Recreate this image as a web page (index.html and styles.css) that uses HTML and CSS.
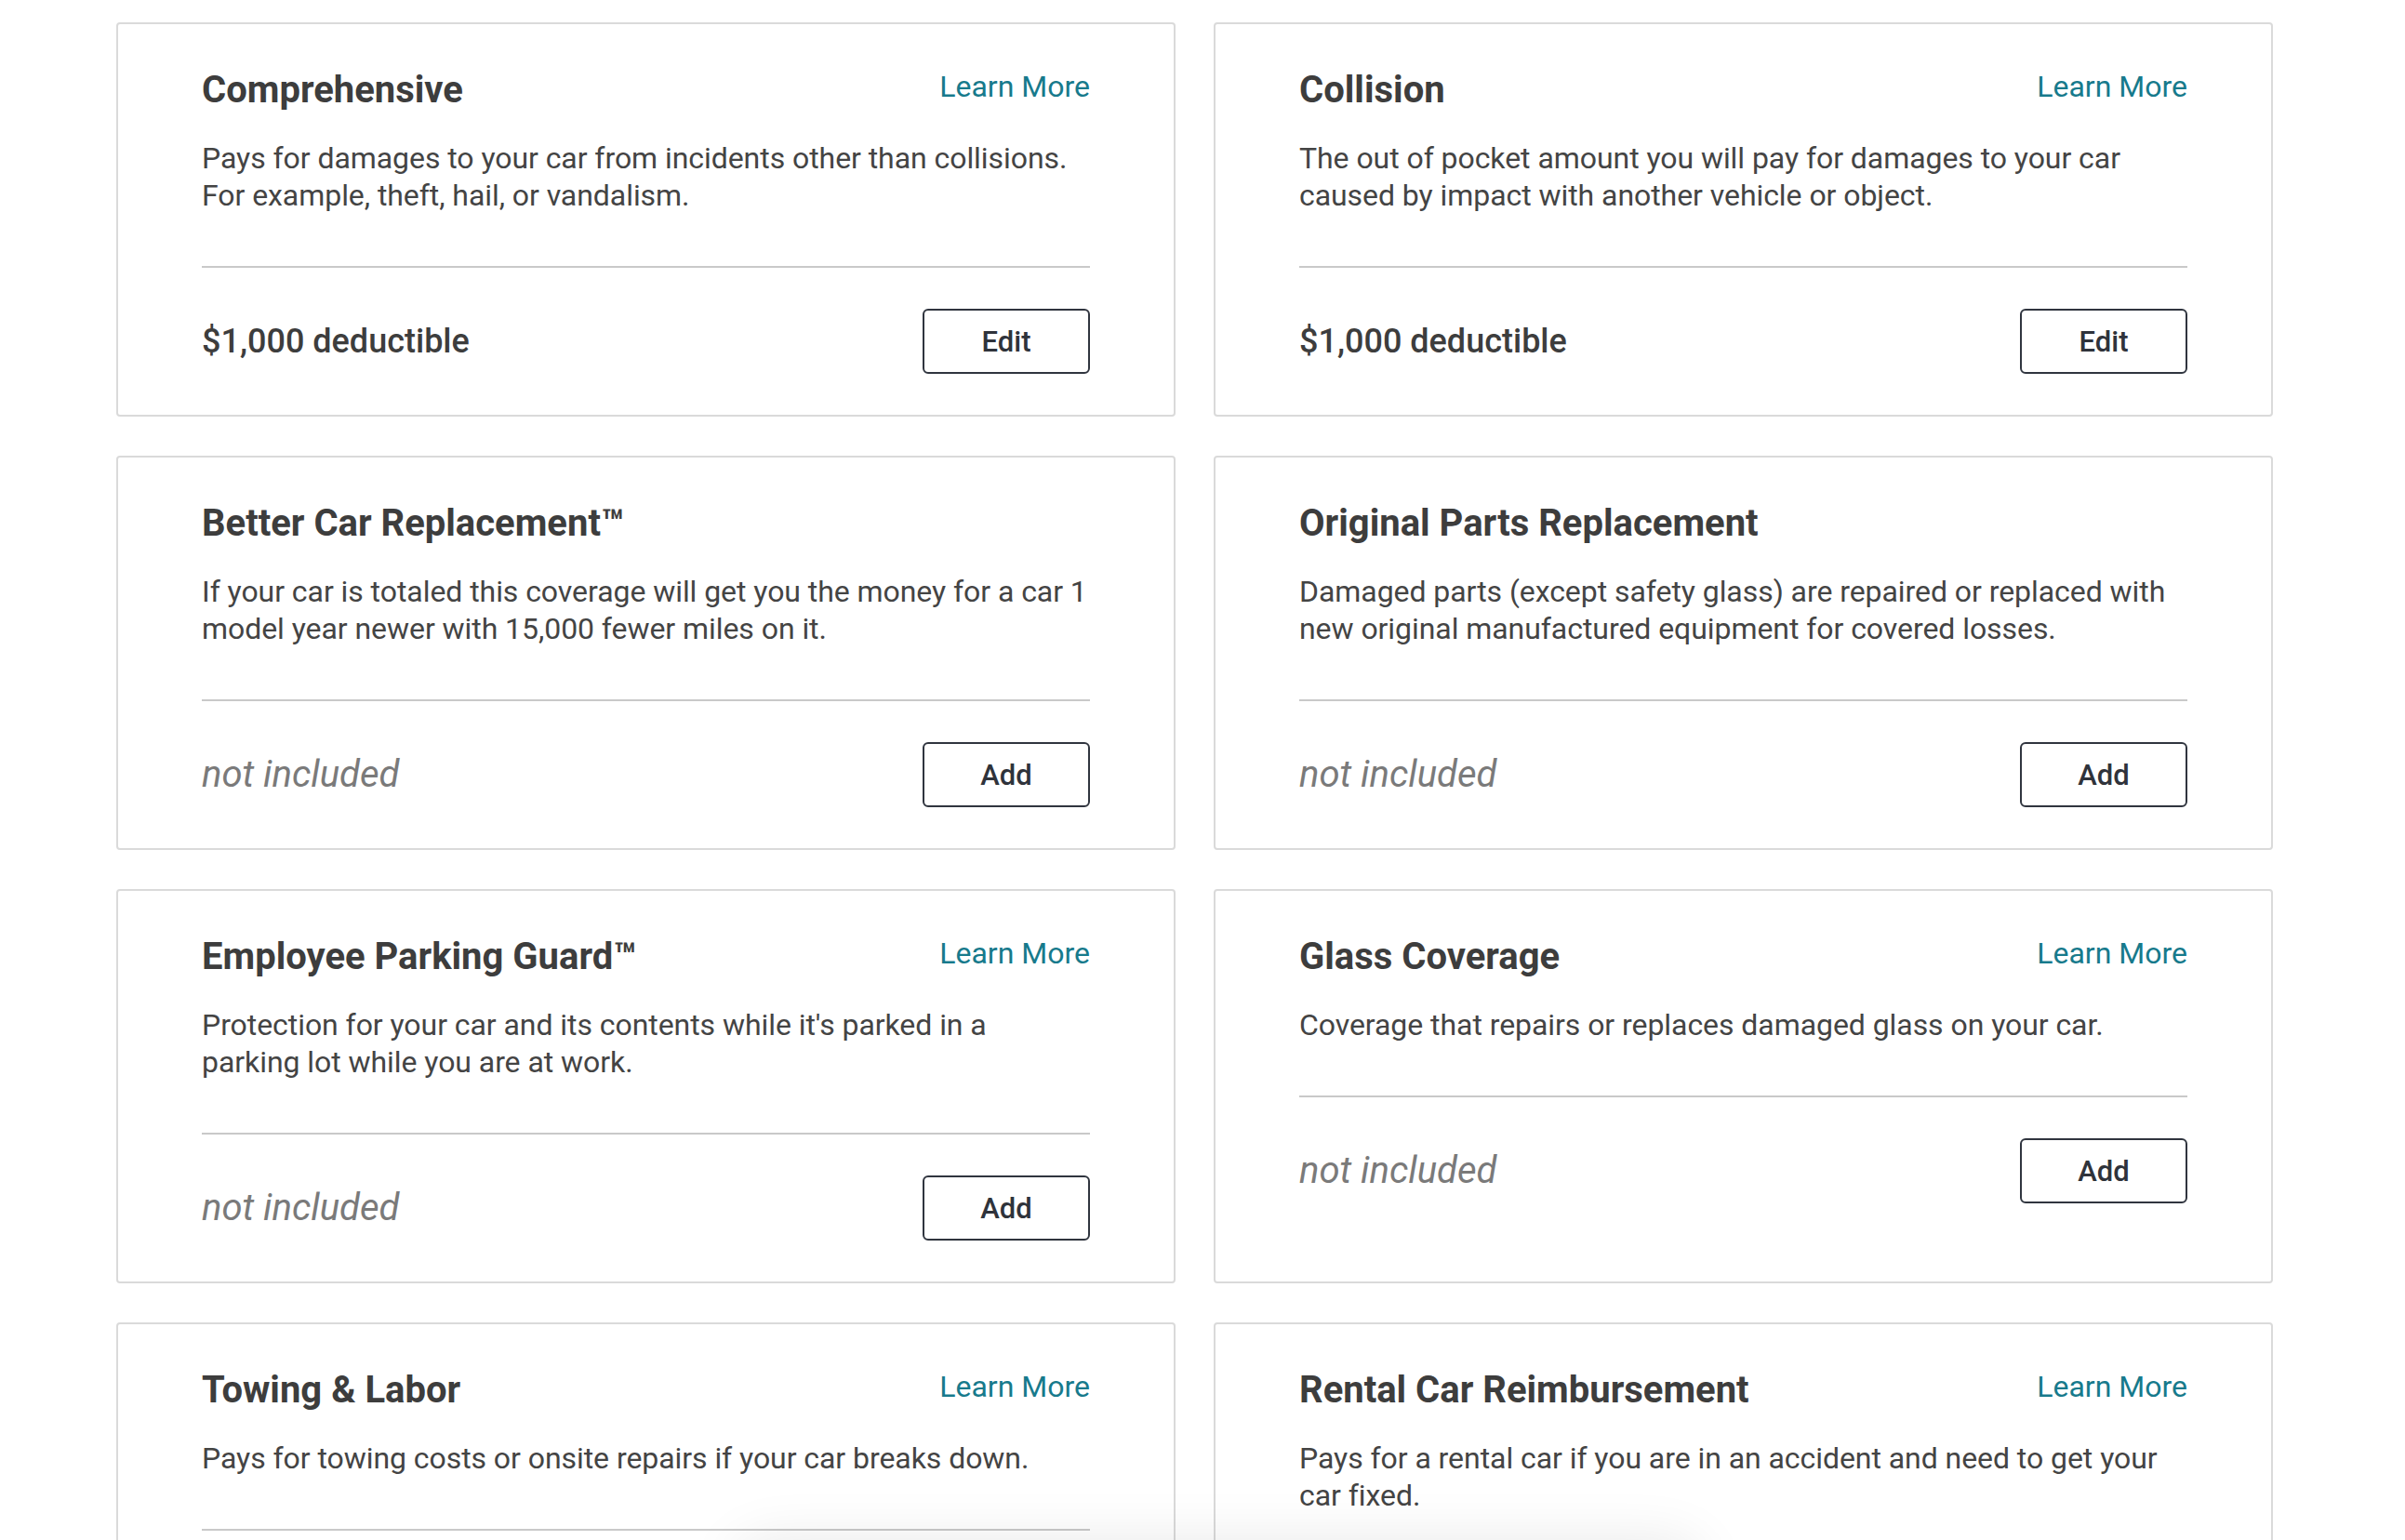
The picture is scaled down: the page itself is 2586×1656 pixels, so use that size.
FILE: index.html
```html
<!DOCTYPE html>
<html>
<head>
    <title>Coverages</title>
    <meta charset="utf-8">
    <link rel="stylesheet" href="styles.css">
</head>
<body>
<div class="coverage-grid">
    <div class="coverage-card">
        <div class="card-head">
            <h3>Comprehensive</h3>
            <a href="#" class="learn-more">Learn More</a>
        </div>
        <p class="card-desc">Pays for damages to your car from incidents other than collisions. For example, theft, hail, or vandalism.</p>
        <div class="card-foot">
            <span class="amount">$1,000 deductible</span>
            <button type="button">Edit</button>
        </div>
    </div>

    <div class="coverage-card">
        <div class="card-head">
            <h3>Collision</h3>
            <a href="#" class="learn-more">Learn More</a>
        </div>
        <p class="card-desc">The out of pocket amount you will pay for damages to your car caused by impact with another vehicle or object.</p>
        <div class="card-foot">
            <span class="amount">$1,000 deductible</span>
            <button type="button">Edit</button>
        </div>
    </div>

    <div class="coverage-card">
        <div class="card-head">
            <h3>Better Car Replacement™</h3>
        </div>
        <p class="card-desc">If your car is totaled this coverage will get you the money for a car 1 model year newer with 15,000 fewer miles on it.</p>
        <div class="card-foot">
            <span class="amount empty">not included</span>
            <button type="button">Add</button>
        </div>
    </div>

    <div class="coverage-card">
        <div class="card-head">
            <h3>Original Parts Replacement</h3>
        </div>
        <p class="card-desc">Damaged parts (except safety glass) are repaired or replaced with new original manufactured equipment for covered losses.</p>
        <div class="card-foot">
            <span class="amount empty">not included</span>
            <button type="button">Add</button>
        </div>
    </div>

    <div class="coverage-card">
        <div class="card-head">
            <h3>Employee Parking Guard™</h3>
            <a href="#" class="learn-more">Learn More</a>
        </div>
        <p class="card-desc">Protection for your car and its contents while it's parked in a parking lot while you are at work.</p>
        <div class="card-foot">
            <span class="amount empty">not included</span>
            <button type="button">Add</button>
        </div>
    </div>

    <div class="coverage-card">
        <div class="card-head">
            <h3>Glass Coverage</h3>
            <a href="#" class="learn-more">Learn More</a>
        </div>
        <p class="card-desc">Coverage that repairs or replaces damaged glass on your car.</p>
        <div class="card-foot">
            <span class="amount empty">not included</span>
            <button type="button">Add</button>
        </div>
    </div>

    <div class="coverage-card">
        <div class="card-head">
            <h3>Towing &amp; Labor</h3>
            <a href="#" class="learn-more">Learn More</a>
        </div>
        <p class="card-desc">Pays for towing costs or onsite repairs if your car breaks down.</p>
        <div class="card-foot">
            <span class="amount empty">not included</span>
            <button type="button">Add</button>
        </div>
    </div>

    <div class="coverage-card">
        <div class="card-head">
            <h3>Rental Car Reimbursement</h3>
            <a href="#" class="learn-more">Learn More</a>
        </div>
        <p class="card-desc">Pays for a rental car if you are in an accident and need to get your car fixed.</p>
        <div class="card-foot">
            <span class="amount empty">not included</span>
            <button type="button">Add</button>
        </div>
    </div>
</div>

<!-- barre collante, juste sous le bord de la fenêtre -->
<div class="sticky-bar"></div>
</body>
</html>
```

FILE: styles.css
```css
body {
    margin: 0;
    padding: 24px 142px 0 125px;
    background-color: #ffffff;
    font-family: Roboto, "Liberation Sans", Arial, sans-serif;
    color: #444444;
}
.coverage-grid {
    display: grid;
    grid-template-columns: repeat(2, 1139px);
    column-gap: 41px;
    row-gap: 42px;
}
.coverage-card {
    border: 2px solid #dadada;
    border-radius: 4px;
    padding: 47px 90px 44px;
    background-color: #ffffff;
}
.card-head {
    display: flex;
    justify-content: space-between;
    align-items: flex-start;
}
.card-head h3 {
    margin: 0;
    font-size: 40px;
    line-height: 48px;
    font-weight: 700;
    color: #3d3d3d;
}
.learn-more {
    margin-top: -1px;
    font-size: 32px;
    line-height: 42px;
    color: #177a8c;
    text-decoration: none;
}
.card-desc {
    margin: 29px 0 0;
    font-size: 32px;
    line-height: 40px;
    letter-spacing: -0.06px;
    color: #444444;
}
.card-foot {
    display: flex;
    justify-content: space-between;
    align-items: center;
    margin-top: 56px;
    padding-top: 44px;
    border-top: 2px solid #c9c9c9;
}
.amount {
    font-size: 36px;
    line-height: 44px;
    font-weight: 500;
    color: #3d3d3d;
}
.amount.empty {
    font-size: 40px;
    font-weight: 400;
    font-style: italic;
    color: #7a7a7a;
}
button {
    width: 180px;
    height: 70px;
    border: 2px solid #30353f;
    border-radius: 6px;
    background-color: #ffffff;
    color: #2f333b;
    font-family: Roboto, "Liberation Sans", Arial, sans-serif;
    font-size: 31px;
    font-weight: 500;
    cursor: pointer;
}
.sticky-bar {
    position: fixed;
    left: 790px;
    bottom: -70px;
    width: 1040px;
    height: 70px;
    border-radius: 35px;
    background-color: #ffffff;
    box-shadow: 0 0 60px rgba(0, 0, 0, 0.09);
}
```
